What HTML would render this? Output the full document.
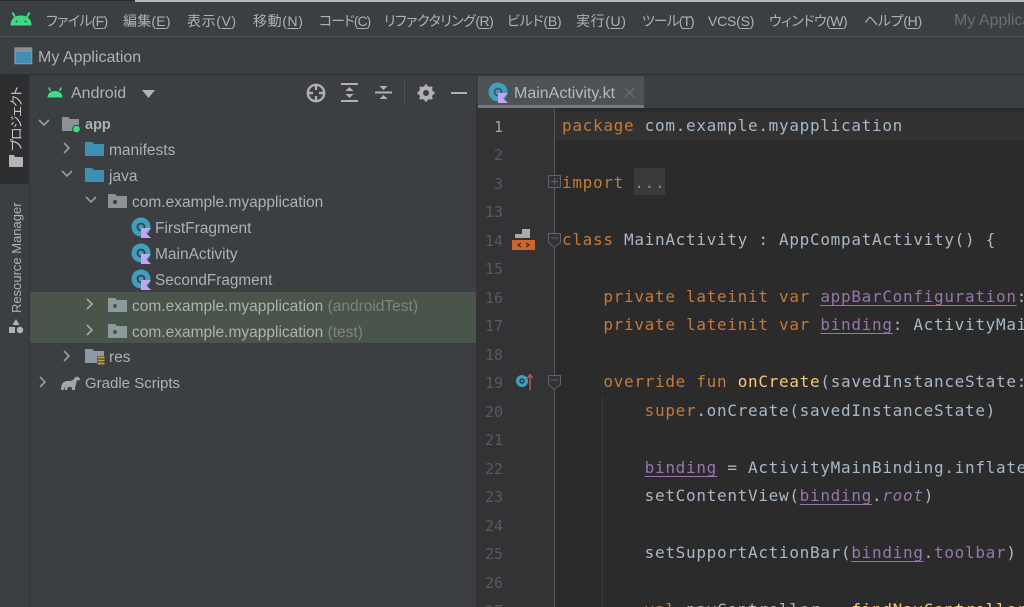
<!DOCTYPE html>
<html lang="ja"><head><meta charset="utf-8"><title>My Application</title>
<style>
html,body{margin:0;padding:0;background:#3c3f41}
#r{position:relative;width:1024px;height:607px;overflow:hidden;background:#3c3f41;font-family:"Liberation Sans","Noto Sans CJK JP",sans-serif;color:#b4b7b9}
#r div,#r svg{position:absolute}
.m{top:11px;margin-top:1px;font-size:14px;line-height:18px;white-space:nowrap;color:#aeb1b3;font-feature-settings:"palt"}
.m u{text-underline-offset:2px}
.t{font-size:15.5px;line-height:20px;margin-top:2px;white-space:nowrap;color:#aeb1b3}
.c{font-family:"DejaVu Sans Mono",monospace;font-size:16px;letter-spacing:.7px;line-height:20px;white-space:pre;color:#a9b7c6;left:562px}
.n{font-family:"DejaVu Sans Mono",monospace;font-size:15px;line-height:20px;margin-top:1px;width:27px;text-align:right;left:476px;color:#585b5d}
.k{color:#c47a38}.p{color:#9876aa}.f{color:#ffc66d}
.u{text-decoration:underline;text-underline-offset:3px}
</style></head><body><div id="r">

<div style="left:0;top:0;width:135px;height:1px;background:#2b2b2b"></div>
<div style="left:135px;top:0;width:889px;height:2px;background:#b9b9b9"></div>
<div style="left:0;top:36px;width:1024px;height:1px;background:#515455"></div>
<div style="left:0;top:74px;width:1024px;height:1px;background:#2d2f30"></div>

<svg style="left:10px;top:11px" width="22" height="15" viewBox="0 0 22 15"><path d="M.5 14.500C.5 8 4.500 4.500 11 4.500S21.500 8 21.500 14.500z" fill="#3ddc84"/><path d="M5 6 2.500 1.500M17 6l2.500-4.500" stroke="#3ddc84" stroke-width="2"/><circle cx="6.500" cy="10.500" r=".9" fill="#3c3f41"/><circle cx="15.500" cy="10.500" r=".9" fill="#3c3f41"/></svg>
<div class="m" style="left:46px;letter-spacing:-.7px">ファイル(<u>F</u>)</div>
<div class="m" style="left:123px;letter-spacing:.2px">編集(<u>E</u>)</div>
<div class="m" style="left:187px;letter-spacing:.6px">表示(<u>V</u>)</div>
<div class="m" style="left:253px;letter-spacing:.6px">移動(<u>N</u>)</div>
<div class="m" style="left:319px;letter-spacing:-1.1px">コード(<u>C</u>)</div>
<div class="m" style="left:384px;letter-spacing:-.5px">リファクタリング(<u>R</u>)</div>
<div class="m" style="left:507px;letter-spacing:-.2px">ビルド(<u>B</u>)</div>
<div class="m" style="left:576px;letter-spacing:.6px">実行(<u>U</u>)</div>
<div class="m" style="left:642px;letter-spacing:-1px">ツール(<u>T</u>)</div>
<div class="m" style="left:708px;letter-spacing:-.2px">VCS(<u>S</u>)</div>
<div class="m" style="left:769px;letter-spacing:-.5px">ウィンドウ(<u>W</u>)</div>
<div class="m" style="left:864px;letter-spacing:-.3px">ヘルプ(<u>H</u>)</div>
<div class="m" style="left:954px;color:#6c6f71;font-size:16px">My Application</div>

<svg style="left:14px;top:47px" width="19" height="18" viewBox="0 0 19 18"><rect x=".8" y=".8" width="17" height="16" fill="#8c9093" stroke="#8c9093"/><rect x="2" y="5" width="15" height="11" fill="#3f8fb3"/></svg>
<div class="t" style="left:38px;top:46px;font-size:16px">My Application</div>

<div style="left:0;top:75px;width:29px;height:532px;background:#3c3f41"></div>
<div style="left:29px;top:75px;width:1px;height:532px;background:#333536"></div>
<div style="left:0;top:75px;width:29px;height:109px;background:#2c2e2f"></div>
<div style="left:8px;top:151px;width:66px;height:18px;transform-origin:0 0;transform:rotate(-90deg);font-size:13px;line-height:18px;color:#c6c8c9;white-space:nowrap;font-feature-settings:'palt';letter-spacing:-1px">プロジェクト</div>
<svg style="left:8px;top:154px" width="16" height="14" viewBox="0 0 16 14"><path d="M1 1h5l1 2h8v10H1z" fill="#b3b5b6"/></svg>
<div style="left:8px;top:201px;width:18px;height:112px;writing-mode:vertical-rl;transform:rotate(180deg);font-size:13px;line-height:18px;color:#aeb1b3;white-space:nowrap">Resource Manager</div>
<svg style="left:8px;top:318px" width="16" height="16" viewBox="0 0 16 16"><path d="M8 1l3.500 6h-7z" fill="#b0b2b4"/><rect x="1" y="9" width="6" height="6" fill="#b0b2b4"/><circle cx="12" cy="12" r="3.200" fill="#b0b2b4"/></svg>

<svg style="left:47px;top:86px" width="16" height="12" viewBox="0 0 16 12"><path d="M.5 11.500c0-4 3.200-6.500 7.500-6.500s7.500 2.500 7.500 6.500z" fill="#3ddc84"/><path d="M3.500 5 1.800 1.500M12.500 5l1.700-3.500" stroke="#3ddc84" stroke-width="1.600"/></svg>
<div class="t" style="left:71px;top:82px;font-size:16px">Android</div>
<svg style="left:142px;top:90px" width="13" height="8" viewBox="0 0 13 8"><path d="M0 0h13L6.500 8z" fill="#afb1b3"/></svg>

<svg style="left:306px;top:83px" width="20" height="20" viewBox="0 0 20 20" fill="none" stroke="#afb1b3" stroke-width="2.400"><circle cx="10" cy="10" r="8.200"/><path d="M10 1v6M10 13v6M1 10h6M13 10h6"/></svg>
<svg style="left:341px;top:83px" width="17" height="19" viewBox="0 0 17 19" fill="#afb1b3"><rect x="0" y="0" width="17" height="2"/><rect x="0" y="17" width="17" height="2"/><path d="M8.500 4l4 4h-8zM8.500 15l4-4h-8z"/></svg>
<svg style="left:375px;top:83px" width="17" height="19" viewBox="0 0 17 19" fill="#afb1b3"><rect x="0" y="8.500" width="17" height="2"/><path d="M8.500 7l4-4h-8zM8.500 12l4 4h-8z"/></svg>
<div style="left:404px;top:80px;width:1px;height:25px;background:#515455"></div>
<svg style="left:417px;top:84px" width="18" height="18" viewBox="0 0 18 18"><circle cx="9" cy="9" r="5" fill="none" stroke="#afb1b3" stroke-width="4"/><path d="M9 .5v3M9 14.500v3M.5 9h3M14.500 9h3M3 3l2 2M13 13l2 2M15 3l-2 2M5 13l-2 2" stroke="#afb1b3" stroke-width="2.800"/></svg>
<div style="left:451px;top:92px;width:16px;height:2px;background:#afb1b3"></div>

<div style="left:30px;top:292px;width:446px;height:51px;background:#49544a"></div>

<svg style="left:37px;top:118px" width="14" height="10" viewBox="0 0 14 10" fill="none" stroke="#9a9da0" stroke-width="1.600"><path d="M2 2l5 5 5-5"/></svg>
<svg style="left:61px;top:116px" width="21" height="18" viewBox="0 0 21 18"><path d="M1 1h6l2 2h9v12H1z" fill="#8d9296"/><circle cx="15.500" cy="13" r="3.800" fill="#3ddc84" stroke="#3c3f41"/></svg>
<div class="t" style="left:85px;top:113px;font-weight:bold;font-size:14.500px">app</div>

<svg style="left:62px;top:141px" width="10" height="14" viewBox="0 0 10 14" fill="none" stroke="#9a9da0" stroke-width="1.600"><path d="M2 2l5 5-5 5"/></svg>
<svg style="left:85px;top:141px" width="19" height="16" viewBox="0 0 19 16"><path d="M0 1h7l2 2h10v12H0z" fill="#3f8fb3"/></svg>
<div class="t" style="left:109px;top:139px">manifests</div>

<svg style="left:60px;top:169px" width="14" height="10" viewBox="0 0 14 10" fill="none" stroke="#9a9da0" stroke-width="1.600"><path d="M2 2l5 5 5-5"/></svg>
<svg style="left:85px;top:167px" width="19" height="16" viewBox="0 0 19 16"><path d="M0 1h7l2 2h10v12H0z" fill="#3f8fb3"/></svg>
<div class="t" style="left:109px;top:165px">java</div>

<svg style="left:84px;top:195px" width="14" height="10" viewBox="0 0 14 10" fill="none" stroke="#9a9da0" stroke-width="1.600"><path d="M2 2l5 5 5-5"/></svg>
<svg style="left:108px;top:193px" width="19" height="16" viewBox="0 0 19 16"><path d="M0 1h7l2 2h10v12H0z" fill="#8d9296"/><circle cx="7" cy="9" r="2" fill="#3c3f41"/></svg>
<div class="t" style="left:132px;top:191px">com.example.myapplication</div>

<svg style="left:131px;top:217px" width="21" height="22" viewBox="0 0 21 22"><circle cx="10" cy="10" r="9.500" fill="#3f9fbf"/><circle cx="10" cy="10" r="3.500" fill="none" stroke="#3c3f41" stroke-width="1.800"/><path d="M10 11h10l-5 5 5 5H10z" fill="#c8a4f0"/></svg>
<div class="t" style="left:155px;top:217px">FirstFragment</div>
<svg style="left:131px;top:243px" width="21" height="22" viewBox="0 0 21 22"><circle cx="10" cy="10" r="9.500" fill="#3f9fbf"/><circle cx="10" cy="10" r="3.500" fill="none" stroke="#3c3f41" stroke-width="1.800"/><path d="M10 11h10l-5 5 5 5H10z" fill="#c8a4f0"/></svg>
<div class="t" style="left:155px;top:243px">MainActivity</div>
<svg style="left:131px;top:269px" width="21" height="22" viewBox="0 0 21 22"><circle cx="10" cy="10" r="9.500" fill="#3f9fbf"/><circle cx="10" cy="10" r="3.500" fill="none" stroke="#3c3f41" stroke-width="1.800"/><path d="M10 11h10l-5 5 5 5H10z" fill="#c8a4f0"/></svg>
<div class="t" style="left:155px;top:269px;font-size:15.300px">SecondFragment</div>

<svg style="left:85px;top:297px" width="10" height="14" viewBox="0 0 10 14" fill="none" stroke="#a5a8aa" stroke-width="1.600"><path d="M2 2l5 5-5 5"/></svg>
<svg style="left:108px;top:297px" width="19" height="16" viewBox="0 0 19 16"><path d="M0 1h7l2 2h10v12H0z" fill="#8d9a9c"/><circle cx="7" cy="9" r="2" fill="#49544a"/></svg>
<div class="t" style="left:132px;top:295px">com.example.myapplication <span style="color:#7d857e">(androidTest)</span></div>
<svg style="left:85px;top:323px" width="10" height="14" viewBox="0 0 10 14" fill="none" stroke="#a5a8aa" stroke-width="1.600"><path d="M2 2l5 5-5 5"/></svg>
<svg style="left:108px;top:323px" width="19" height="16" viewBox="0 0 19 16"><path d="M0 1h7l2 2h10v12H0z" fill="#8d9a9c"/><circle cx="7" cy="9" r="2" fill="#49544a"/></svg>
<div class="t" style="left:132px;top:321px">com.example.myapplication <span style="color:#7d857e">(test)</span></div>

<svg style="left:62px;top:349px" width="10" height="14" viewBox="0 0 10 14" fill="none" stroke="#9a9da0" stroke-width="1.600"><path d="M2 2l5 5-5 5"/></svg>
<svg style="left:85px;top:348px" width="21" height="19" viewBox="0 0 21 19"><path d="M0 1h7l2 2h10v12H0z" fill="#8d9aa3"/><rect x="12" y="8" width="8" height="10" fill="#3c3f41"/><path d="M12.500 9.500h7M12.500 12.500h7M12.500 15.500h7" stroke="#c9a248" stroke-width="1.800"/></svg>
<div class="t" style="left:109px;top:346px">res</div>

<svg style="left:38px;top:375px" width="10" height="14" viewBox="0 0 10 14" fill="none" stroke="#9a9da0" stroke-width="1.600"><path d="M2 2l5 5-5 5"/></svg>
<svg style="left:60px;top:375px" width="21" height="16" viewBox="0 0 21 16"><path d="M1 15c0-6 2-9 7-9 3 0 5-.500 6-2 1-2 3-3 5-1.500 1.500 1 1 3-.500 3-1 0-1.500-.500-1.500-.500-1 5-2 6-2 10h-3l-.500-3H8l-1 3H5l-.500-3-1 3z" fill="#a2a5a7"/></svg>
<div class="t" style="left:85px;top:372px;font-size:15px">Gradle Scripts</div>

<div style="left:476px;top:75px;width:1px;height:532px;background:#323435"></div>
<div style="left:477px;top:75px;width:547px;height:33px;background:#3c3f41"></div>
<div style="left:478px;top:76px;width:166px;height:32px;background:#4e5254"></div>
<div style="left:478px;top:105px;width:166px;height:3px;background:#747a80"></div>
<svg style="left:488px;top:82px" width="21" height="22" viewBox="0 0 21 22"><circle cx="10" cy="10" r="9.500" fill="#3f9fbf"/><circle cx="10" cy="10" r="3.500" fill="none" stroke="#4e5254" stroke-width="1.800"/><path d="M10 11h10l-5 5 5 5H10z" fill="#c8a4f0"/></svg>
<div class="t" style="left:514px;top:82px;color:#b6b9bb;font-size:16px">MainActivity.kt</div>
<svg style="left:624px;top:87px" width="11" height="11" viewBox="0 0 11 11" stroke="#6f7376" stroke-width="1.200"><path d="M1 1l9 9M10 1l-9 9"/></svg>

<div style="left:477px;top:108px;width:547px;height:499px;background:#2b2b2b"></div>
<div style="left:477px;top:108px;width:78px;height:499px;background:#313335"></div>
<div style="left:555px;top:112px;width:469px;height:28px;background:#323232"></div>
<div style="left:554px;top:108px;width:1px;height:499px;background:#555759"></div>
<div style="left:602px;top:396px;width:1px;height:211px;background:#383a3b"></div>

<div class="n" style="top:116px;color:#a4a3a3">1</div>
<div class="n" style="top:144px">2</div>
<div class="n" style="top:173px">3</div>
<div class="n" style="top:201px">13</div>
<div class="n" style="top:230px">14</div>
<div class="n" style="top:258px">15</div>
<div class="n" style="top:287px">16</div>
<div class="n" style="top:315px">17</div>
<div class="n" style="top:344px">18</div>
<div class="n" style="top:372px">19</div>
<div class="n" style="top:401px">20</div>
<div class="n" style="top:429px">21</div>
<div class="n" style="top:458px">22</div>
<div class="n" style="top:486px">23</div>
<div class="n" style="top:515px">24</div>
<div class="n" style="top:543px">25</div>
<div class="n" style="top:572px">26</div>
<div class="n" style="top:600px">27</div>

<svg style="left:512px;top:228px" width="24" height="23" viewBox="0 0 24 23"><path d="M3 10V6h7V1h8v9z" fill="#a9abad"/><rect x="0" y="12" width="23" height="10" fill="#d0652c"/><path d="M9 15l-3 2 3 2M14 15l3 2-3 2" stroke="#2b2b2b" stroke-width="1.200" fill="none"/></svg>
<svg style="left:515px;top:372px" width="20" height="20" viewBox="0 0 20 20"><circle cx="7" cy="9" r="6" fill="#3f9fbf"/><circle cx="7" cy="9" r="2" fill="none" stroke="#2b2b2b" stroke-width="1.300"/><path d="M15 18V3M12.500 6 15 2.500 17.500 6" stroke="#c75450" stroke-width="1.400" fill="none"/></svg>

<svg style="left:548px;top:175px" width="13" height="13" viewBox="0 0 13 13" fill="#313335" stroke="#606366"><rect x=".5" y=".5" width="12" height="12"/><path d="M3 6.500h7M6.500 3v7"/></svg>
<svg style="left:548px;top:233px" width="13" height="15" viewBox="0 0 13 15" fill="#313335" stroke="#606366"><path d="M.5.500h12v9l-6 5-6-5z"/><path d="M3 5h7"/></svg>
<svg style="left:548px;top:375px" width="13" height="15" viewBox="0 0 13 15" fill="#313335" stroke="#606366"><path d="M.5.500h12v9l-6 5-6-5z"/><path d="M3 5h7"/></svg>

<div style="left:634px;top:168px;width:31px;height:27px;background:#3a3a3a"></div>

<div class="c" style="top:116px"><span class="k">package</span> com.example.myapplication</div>
<div class="c" style="top:173px"><span class="k">import</span> <span style="color:#8a8a8a">...</span></div>
<div class="c" style="top:230px"><span class="k">class</span> MainActivity : AppCompatActivity() {</div>
<div class="c" style="top:287px">    <span class="k">private lateinit var</span> <span class="p u">appBarConfiguration</span>: AppBarConfiguration</div>
<div class="c" style="top:315px">    <span class="k">private lateinit var</span> <span class="p u">binding</span>: ActivityMainBinding</div>
<div class="c" style="top:372px">    <span class="k">override fun</span> <span class="f">onCreate</span>(savedInstanceState: Bundle?) {</div>
<div class="c" style="top:401px">        <span class="k">super</span>.onCreate(savedInstanceState)</div>
<div class="c" style="top:458px">        <span class="p u">binding</span> = ActivityMainBinding.inflate(layoutInflater)</div>
<div class="c" style="top:486px">        setContentView(<span class="p u">binding</span>.<span class="p"><i>root</i></span>)</div>
<div class="c" style="top:543px">        setSupportActionBar(<span class="p u">binding</span>.<span class="p">toolbar</span>)</div>
<div class="c" style="top:600px">        <span class="k">val</span> navController = <span class="f">findNavController</span>(R.id.nav)</div>

</div></body></html>
